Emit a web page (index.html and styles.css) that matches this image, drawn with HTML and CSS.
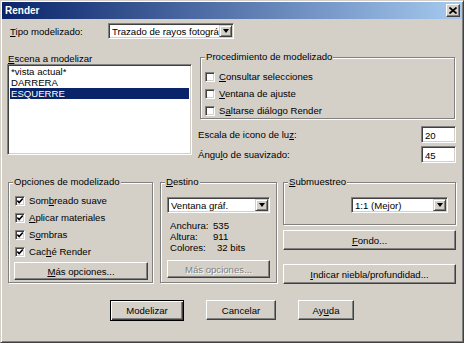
FILE: index.html
```html
<!DOCTYPE html>
<html lang="es">
<head>
  <meta charset="UTF-8">
  <title>Render</title>
  <link rel="stylesheet" href="styles.css">
</head>
<body>
  <div class="window">
    <div class="titlebar">
      <span class="title">Render</span>
      <span class="close">
        <svg width="8" height="7" viewBox="0 0 8 7"><path d="M0.5 0.5 L7.5 6.5 M7.5 0.5 L0.5 6.5" stroke="#000" stroke-width="1.7"/></svg>
      </span>
    </div>
    <div class="content">
      <div class="tipo-row">
        <span class="tipo-label"><u>T</u>ipo modelizado:</span>
        <div class="combo tipo-combo">
          <span class="combo-text">Trazado de rayos fotográ</span>
          <span class="combo-btn"><i class="arrow"></i></span>
        </div>
      </div>

      <div class="top-section">
        <div class="scene-col">
          <div class="scene-label"><u>E</u>scena a modelizar</div>
          <div class="listbox">
            <div class="item">*vista actual*</div>
            <div class="item">DARRERA</div>
            <div class="item selected">ESQUERRE</div>
          </div>
        </div>
        <div class="proc-col">
          <div class="group proc-group">
            <span class="legend">Procedimiento de modelizado</span>
            <div class="check"><span class="box"></span><span><u>C</u>onsultar selecciones</span></div>
            <div class="check"><span class="box"></span><span><u>V</u>entana de ajuste</span></div>
            <div class="check"><span class="box"></span><span>S<u>a</u>ltarse diálogo Render</span></div>
          </div>
          <div class="field-row">
            <span class="field-label">Escala de icono de lu<u>z</u>:</span>
            <div class="textbox">20</div>
          </div>
          <div class="field-row second">
            <span class="field-label">Ángu<u>l</u>o de suavizado:</span>
            <div class="textbox">45</div>
          </div>
        </div>
      </div>

      <div class="bottom-section">
        <div class="group opts-group">
          <span class="legend">Opciones de modelizado</span>
          <div class="check"><span class="box"><svg width="6" height="6" viewBox="0 0 6 6"><path d="M0.3 2.6 L2.2 4.6 L5.8 0.6" stroke="#000" stroke-width="1.6" fill="none"/></svg></span><span>Som<u>b</u>reado suave</span></div>
          <div class="check"><span class="box"><svg width="6" height="6" viewBox="0 0 6 6"><path d="M0.3 2.6 L2.2 4.6 L5.8 0.6" stroke="#000" stroke-width="1.6" fill="none"/></svg></span><span><u>A</u>plicar materiales</span></div>
          <div class="check"><span class="box"><svg width="6" height="6" viewBox="0 0 6 6"><path d="M0.3 2.6 L2.2 4.6 L5.8 0.6" stroke="#000" stroke-width="1.6" fill="none"/></svg></span><span>S<u>o</u>mbras</span></div>
          <div class="check"><span class="box"><svg width="6" height="6" viewBox="0 0 6 6"><path d="M0.3 2.6 L2.2 4.6 L5.8 0.6" stroke="#000" stroke-width="1.6" fill="none"/></svg></span><span>Cac<u>h</u>é Render</span></div>
          <div class="btn opts-btn"><u>M</u>ás opciones...</div>
        </div>

        <div class="group dest-group">
          <span class="legend"><u>D</u>estino</span>
          <div class="combo">
            <span class="combo-text">Ventana gráf.</span>
            <span class="combo-btn"><i class="arrow"></i></span>
          </div>
          <div class="info">
            <span>Anchura:</span><span>535</span>
            <span>Altura:</span><span>911</span>
            <span>Colores:</span><span class="bits">32 bits</span>
          </div>
          <div class="btn disabled">Más opciones...</div>
        </div>

        <div class="right-col">
          <div class="group sub-group">
            <span class="legend"><u>S</u>ubmuestreo</span>
            <div class="combo sub-combo">
              <span class="combo-text">1:1 (Mejor)</span>
              <span class="combo-btn"><i class="arrow"></i></span>
            </div>
          </div>
          <div class="btn wide fondo"><u>F</u>ondo...</div>
          <div class="btn wide niebla"><u>I</u>ndicar niebla/profundidad...</div>
        </div>
      </div>

      <div class="footer">
        <div class="btn default">Modelizar</div>
        <div class="btn cancel">Cancelar</div>
        <div class="btn help">Ay<u>u</u>da</div>
      </div>
    </div>
  </div>
</body>
</html>
```

FILE: styles.css
```css
* {
  box-sizing: border-box;
}
body {
  margin: 0;
  background-color: #d4d0c8;
}
u {
  text-decoration: underline;
  text-underline-offset: 1px;
}
.window {
  width: 464px;
  height: 343px;
  padding: 1px;
  background-color: #d4d0c8;
  border: 1px solid;
  border-color: #d4d0c8 #404040 #404040 #d4d0c8;
  box-shadow: inset 1px 1px #fff, inset -1px -1px #808080;
  font-family: 'Liberation Sans', Arial, sans-serif;
  font-size: 9.6px;
  color: #000;
  overflow: hidden;
}

/* title bar */
.titlebar {
  height: 17px;
  display: flex;
  align-items: center;
  padding: 0 2px 0 3px;
  background: linear-gradient(to right, #0a246a, #a6caf0);
}
.title {
  color: #fff;
  font-weight: bold;
  font-size: 10px;
}
.close {
  margin-left: auto;
  width: 14px;
  height: 13px;
  display: flex;
  align-items: center;
  justify-content: center;
  background-color: #d4d0c8;
  border: 1px solid;
  border-color: #fff #404040 #404040 #fff;
  box-shadow: inset -1px -1px #808080;
}

.content {
  padding: 4px 6px 0 5px;
}

/* combo boxes, inputs */
.combo, .textbox, .listbox {
  background-color: #fff;
  border: 1px solid;
  border-color: #808080 #fff #fff #808080;
  box-shadow: inset 1px 1px #404040, inset -1px -1px #d4d0c8;
}
.combo {
  height: 16px;
  display: flex;
  align-items: center;
  padding: 1px 1px 1px 3px;
}
.combo-text {
  flex: 1;
  white-space: nowrap;
  overflow: hidden;
}
.combo-btn {
  width: 13px;
  height: 12px;
  flex-shrink: 0;
  display: flex;
  align-items: center;
  justify-content: center;
  background-color: #d4d0c8;
  border: 1px solid;
  border-color: #d4d0c8 #404040 #404040 #d4d0c8;
  box-shadow: inset 1px 1px #fff, inset -1px -1px #808080;
}
.arrow {
  width: 0;
  height: 0;
  border-left: 3.5px solid transparent;
  border-right: 3.5px solid transparent;
  border-top: 4px solid #000;
}
.textbox {
  width: 35px;
  height: 17px;
  padding: 3px 3px 0;
  margin-left: auto;
}

.tipo-row {
  display: flex;
  align-items: center;
  height: 16px;
}
.tipo-label {
  width: 101px;
  padding-left: 3px;
}
.tipo-combo {
  width: 126px;
}

/* upper half */
.top-section {
  display: flex;
  margin-top: 14px;
}
.scene-col {
  width: 185px;
}
.scene-label {
  height: 11px;
  line-height: 11px;
  padding-left: 1px;
}
.listbox {
  height: 91px;
  padding: 1px 2px;
}
.item {
  height: 11px;
  line-height: 11px;
  padding-left: 1px;
}
.item.selected {
  background-color: #0a246a;
  color: #fff;
}
.proc-col {
  width: 256px;
  margin-left: auto;
  margin-top: 4px;
}

/* group boxes */
.group {
  position: relative;
  border: 1px solid #808080;
  box-shadow: 1px 1px 0 #fff, inset 1px 1px 0 #fff;
}
.legend {
  position: absolute;
  top: -7px;
  left: 4px;
  padding: 0 1px;
  line-height: 12px;
  background-color: #d4d0c8;
}
.check {
  display: flex;
  align-items: center;
  height: 13px;
  gap: 4px;
}
.box {
  width: 10px;
  height: 10px;
  display: flex;
  align-items: center;
  justify-content: center;
  background-color: #fff;
  border: 1px solid;
  border-color: #808080 #fff #fff #808080;
  box-shadow: inset 1px 1px #404040, inset -1px -1px #d4d0c8;
}
.proc-group {
  width: 255px;
  height: 62px;
  padding: 12px 0 0 4px;
  display: flex;
  flex-direction: column;
  gap: 4px;
}
.field-row {
  display: flex;
  align-items: center;
  height: 17px;
  margin-top: 7px;
}
.field-row.second {
  margin-top: 3px;
}
.field-label {
  margin-left: -2px;
}

/* lower half */
.bottom-section {
  display: flex;
  margin-top: 19px;
}
.opts-group {
  width: 145px;
  height: 101px;
  margin-left: 1px;
  padding: 11px 0 0 6px;
  display: flex;
  flex-direction: column;
  gap: 4px;
}
.opts-btn {
  width: 134px;
  margin-left: -1px;
}
.dest-group {
  width: 117px;
  height: 101px;
  margin-left: 7px;
  padding: 14px 6px 0;
}
.info {
  display: grid;
  grid-template-columns: 43px auto;
  margin-top: 7px;
  padding-left: 3px;
  line-height: 11px;
}
.bits {
  padding-left: 4px;
}
.dest-group .btn {
  margin-top: 7px;
}
.right-col {
  width: 173px;
  margin-left: 6px;
  display: flex;
  flex-direction: column;
}
.sub-group {
  height: 43px;
  padding: 14px 7px 0 0;
  display: flex;
  align-items: flex-start;
  justify-content: flex-end;
}
.sub-combo {
  width: 97px;
}

/* buttons */
.btn {
  height: 18px;
  display: flex;
  align-items: center;
  justify-content: center;
  background-color: #d4d0c8;
  border: 1px solid;
  border-color: #fff #404040 #404040 #fff;
  box-shadow: inset -1px -1px #808080;
}
.btn.disabled {
  color: #808080;
  text-shadow: 1px 1px #fff;
}
.btn.wide {
  height: 20px;
}
.fondo {
  margin-top: 5px;
}
.niebla {
  margin-top: 14px;
}
.footer {
  display: flex;
  gap: 22px;
  align-items: flex-start;
  margin-top: 16px;
  padding-left: 103px;
}
.footer .btn {
  height: 20px;
}
.btn.default {
  width: 74px;
  height: 21px;
  border-color: #000;
  box-shadow: inset 1px 1px #fff, inset -1px -1px #404040, inset -2px -2px #808080;
}
.btn.cancel {
  width: 70px;
}
.btn.help {
  width: 56px;
}
```
